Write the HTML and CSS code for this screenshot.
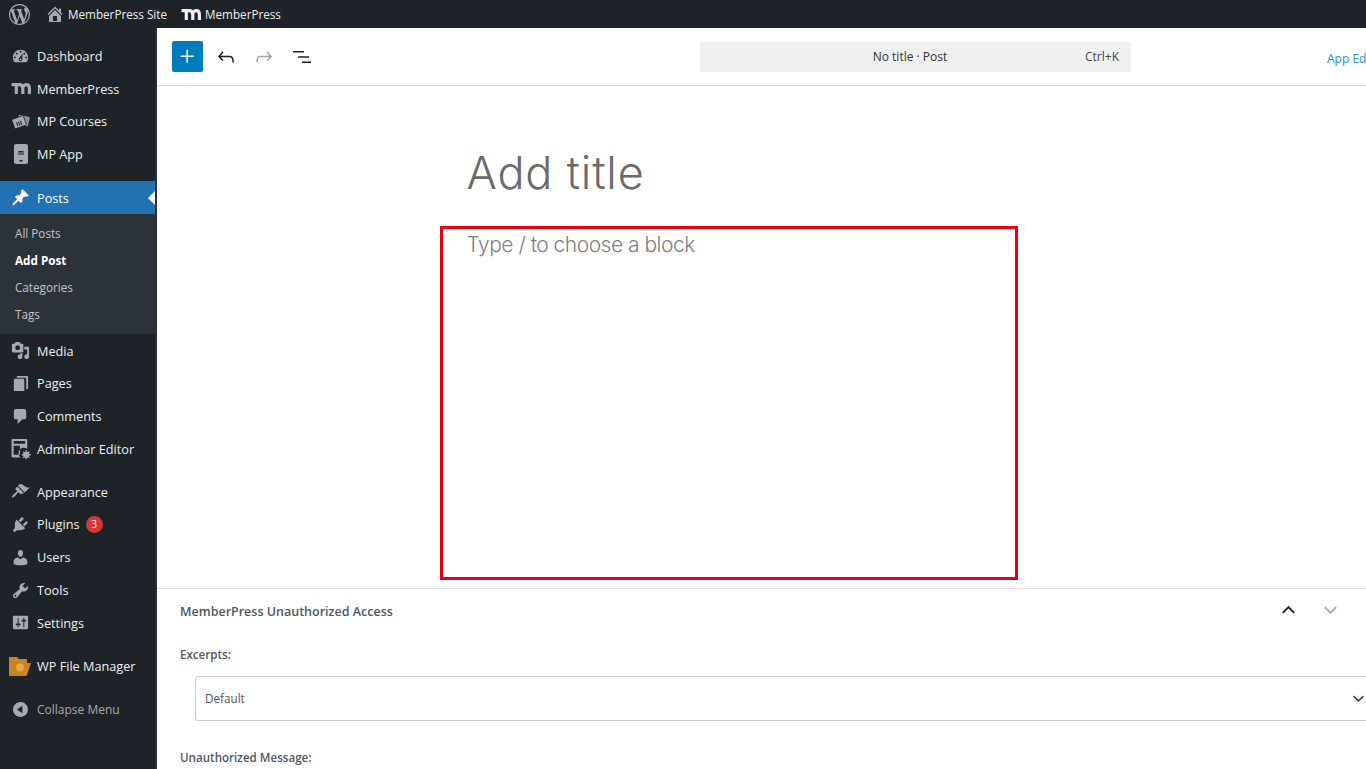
FILE: index.html
```html
<!DOCTYPE html>
<html lang="en">
<head>
<meta charset="utf-8">
<title>Add Post</title>
<link rel="stylesheet" href="styles.css">
</head>
<body>
<div class="app">
  <header class="adminbar">
    <svg class="bar-wp" viewBox="0 0 20 20"><path d="M20 10c0-5.51-4.49-10-10-10C4.48 0 0 4.49 0 10c0 5.52 4.48 10 10 10 5.51 0 10-4.48 10-10zM7.78 15.37L4.37 6.22c.55-.02 1.17-.08 1.17-.08.5-.06.44-1.13-.06-1.11 0 0-1.45.11-2.37.11-.18 0-.37 0-.58-.01C4.12 2.69 6.87 1.11 10 1.11c2.33 0 4.45.87 6.05 2.34-.68-.11-1.65.39-1.65 1.58 0 .74.45 1.36.9 2.1.35.61.55 1.36.55 2.46 0 1.49-1.4 5-1.4 5l-3.03-8.37c.54-.02.82-.17.82-.17.5-.05.44-1.25-.06-1.22 0 0-1.44.12-2.38.12-.87 0-2.33-.12-2.33-.12-.5-.03-.56 1.2-.06 1.22l.92.08 1.26 3.41zM17.41 10c.24-.64.74-1.87.43-4.25.7 1.29 1.05 2.71 1.05 4.25 0 3.29-1.73 6.24-4.4 7.78.97-2.59 1.94-5.2 2.92-7.78zM6.1 18.09C3.12 16.65 1.11 13.53 1.11 10c0-1.3.23-2.48.72-3.59C3.25 10.3 4.67 14.2 6.1 18.09zm4.03-6.63l2.58 6.98c-.86.29-1.76.45-2.71.45-.79 0-1.57-.11-2.29-.33.81-2.38 1.62-4.74 2.42-7.1z"/></svg>
    <svg class="bar-home" viewBox="0 0 20 20"><path d="M16 8.5l1.53 1.53-1.06 1.06L10 4.62l-6.47 6.47-1.06-1.06L10 2.5l4 4v-2h2v4zm-6-2.46l6 5.99V18H4v-5.97zM12 17v-5H8v5h4z"/></svg>
    <span class="bar-text">MemberPress Site</span>
    <svg class="bar-m" viewBox="0 0 20 12"><path d="M.5 2.600h7.500c2.400 0 3.800 1.400 3.800 3.800V12M5.300 3v9M11.800 6.400c0-2.400 1.400-3.800 3.300-3.800s3.300 1.400 3.300 3.800V12"/></svg>
    <span class="bar-text">MemberPress</span>
  </header>
  <div class="body">
    <nav class="sidebar">
      <a class="item"><svg class="ico" viewBox="0 0 20 20"><path d="M3.760 16h12.480c1.100-1.370 1.760-3.110 1.760-5 0-4.420-3.580-8-8-8s-8 3.580-8 8c0 1.890.66 3.630 1.760 5zM10 4c.55 0 1 .45 1 1s-.45 1-1 1-1-.45-1-1 .45-1 1-1zM6 6c.55 0 1 .45 1 1s-.45 1-1 1-1-.45-1-1 .45-1 1-1zm8 0c.55 0 1 .45 1 1s-.45 1-1 1-1-.45-1-1 .45-1 1-1zm-5.370 5.550L12 7v6c0 1.100-.9 2-2 2s-2-.9-2-2c0-.57.24-1.080.63-1.450zM4 10c.55 0 1 .45 1 1s-.45 1-1 1-1-.45-1-1 .45-1 1-1zm12 0c.55 0 1 .45 1 1s-.45 1-1 1-1-.45-1-1 .45-1 1-1zm-5 3c0-.55-.45-1-1-1s-1 .45-1 1 .45 1 1 1 1-.45 1-1z"/></svg><span>Dashboard</span></a>
      <a class="item"><svg class="ico ico-m" viewBox="0 0 20 12"><path d="M.5 2.600h7.500c2.400 0 3.800 1.400 3.800 3.800V12M5.300 3v9M11.800 6.400c0-2.400 1.400-3.800 3.300-3.800s3.300 1.400 3.300 3.800V12"/></svg><span>MemberPress</span></a>
      <a class="item"><svg class="ico" viewBox="0 0 20 20"><rect class="card-back" x="7" y="4" width="12" height="10" rx="1" transform="rotate(14 13 9)"/><rect class="card-edge" x="2" y="5.500" width="13" height="10.500" rx="1" transform="rotate(-20 8.500 10.700)"/><path class="cut" d="M5.800 10.800l1.500 4M7.800 10.100l1.500 4M9.800 9.400l1.500 4"/></svg><span>MP Courses</span></a>
      <a class="item"><svg class="ico ico-app" viewBox="0 0 14 20"><path fill-rule="evenodd" d="M2 0h10c1.100 0 2 .9 2 2v16c0 1.100-.9 2-2 2H2c-1.100 0-2-.9-2-2V2C0 .9.9 0 2 0zm2.500 7v4h1V8h1v3h1V8h1v3h1V7zm1 9v1.500h3V16z"/></svg><span>MP App</span></a>
      <a class="item item-current group-gap"><svg class="ico" viewBox="0 0 20 20"><path d="M10.440 3.020l1.820-1.820 6.360 6.350-1.830 1.820c-1.050-.68-2.480-.57-3.410.36l-.75.75c-.92.93-1.040 2.350-.35 3.410l-1.830 1.820-2.410-2.410-2.800 2.790c-.42.42-3.380 2.710-3.800 2.290s1.860-3.390 2.280-3.810l2.790-2.790L4.100 9.360l1.830-1.820c1.050.69 2.480.57 3.400-.36l.75-.75c.93-.92 1.050-2.350.36-3.410z"/></svg><span>Posts</span></a>
      <div class="submenu">
        <a class="subitem">All Posts</a>
        <a class="subitem subitem-current">Add Post</a>
        <a class="subitem">Categories</a>
        <a class="subitem">Tags</a>
      </div>
      <a class="item"><svg class="ico" viewBox="0 0 20 20"><path fill-rule="evenodd" d="M13 11V4c0-.55-.45-1-1-1h-1.670L9 1H5L3.670 3H2c-.55 0-1 .45-1 1v7c0 .55.45 1 1 1h10c.55 0 1-.45 1-1zM7 4.500c1.380 0 2.500 1.120 2.500 2.500S8.380 9.500 7 9.500 4.500 8.380 4.500 7 5.620 4.500 7 4.500zM14 6h5v10.500c0 1.380-1.120 2.500-2.500 2.500S14 17.880 14 16.500s1.120-2.500 2.500-2.500c.17 0 .34.02.5.05V9h-3V6zm-4 8.050V13h2v3.500c0 1.380-1.120 2.500-2.500 2.500S7 17.880 7 16.500 8.120 14 9.500 14c.17 0 .34.02.5.05z"/></svg><span>Media</span></a>
      <a class="item"><svg class="ico" viewBox="0 0 20 20"><path d="M7 2h10c.55 0 1 .45 1 1v12c0 .55-.45 1-1 1h-1V5c0-.55-.45-1-1-1H6V3c0-.55.45-1 1-1zM4 5h9c.55 0 1 .45 1 1v11c0 .55-.45 1-1 1H4c-.55 0-1-.45-1-1V6c0-.55.45-1 1-1z"/></svg><span>Pages</span></a>
      <a class="item"><svg class="ico" viewBox="0 0 20 20"><path d="M5 2h9c1.100 0 2 .9 2 2v7c0 1.100-.9 2-2 2h-2l-5 5v-5H5c-1.100 0-2-.9-2-2V4c0-1.100.9-2 2-2z"/></svg><span>Comments</span></a>
      <a class="item"><svg class="ico ico-lg" viewBox="0 0 20 20"><path fill-rule="evenodd" d="M1.500 0h13c.55 0 1 .45 1 1v8.500a5 5 0 0 0-6.500 8H1.500c-.55 0-1-.45-1-1V1c0-.55.45-1 1-1zm1 2v2.500h11V2zm0 4.500v8.500h6V6.500z"/><circle cx="14.500" cy="15" r="3"/><circle class="hole" cx="14.500" cy="15" r="1.100"/><path class="cog" d="M14.500 10.800v8.400M10.300 15h8.400M11.500 12l6 6M17.500 12l-6 6"/></svg><span>Adminbar Editor</span></a>
      <a class="item group-gap-mid"><svg class="ico" viewBox="0 0 20 20"><path d="M14.480 11.060L7.410 3.990l1.500-1.500c.5-.56 2.300-.47 3.510.32 1.210.8 1.430 1.280 2.910 2.100 1.180.64 2.450 1.260 4.450.85zm-.71.71L6.700 4.700 4.930 6.470c-.39.39-.39 1.020 0 1.410l1.060 1.060c.39.39.39 1.030 0 1.420-.6.6-1.430 1.110-2.210 1.690-.35.26-.7.53-1.010.84-1.200 1.200-2.400 2.900-1.800 3.500.6.6 2.300-.6 3.500-1.800.31-.31.58-.66.84-1.010.58-.78 1.090-1.610 1.690-2.210.39-.39 1.030-.39 1.420 0l1.060 1.060c.39.39 1.020.39 1.410 0z"/></svg><span>Appearance</span></a>
      <a class="item"><svg class="ico" viewBox="0 0 20 20"><path d="M13.110 4.360L9.870 7.600 8 5.730l3.240-3.240c.35-.34 1.050-.2 1.560.32.52.51.66 1.210.31 1.550zm-8 1.770l.91-1.120 9.010 9.010-1.190.84c-.71.71-2.630 1.160-3.820 1.160H6.140L4.900 17.260c-.59.59-1.540.59-2.120 0-.59-.58-.59-1.530 0-2.120l1.240-1.240v-3.880c0-1.130.4-3.190 1.090-3.890zm7.260 3.970l3.240-3.240c.34-.35 1.040-.21 1.550.31.52.51.66 1.210.31 1.550l-3.240 3.250z"/></svg><span>Plugins</span><b class="badge">3</b></a>
      <a class="item"><svg class="ico" viewBox="0 0 20 20"><path d="M10 9.250c-2.270 0-2.730-3.440-2.730-3.440C7 4.020 7.820 2 9.970 2c2.160 0 2.980 2.020 2.710 3.810 0 0-.41 3.440-2.680 3.440zm0 2.570L12.720 10c2.390 0 4.520 2.330 4.520 4.530v2.490s-3.650 1.130-7.240 1.130c-3.650 0-7.240-1.130-7.240-1.130v-2.490c0-2.250 1.940-4.480 4.470-4.480z"/></svg><span>Users</span></a>
      <a class="item"><svg class="ico" viewBox="0 0 20 20"><path d="M16.680 9.770c-1.340 1.340-3.300 1.670-4.950.99l-5.410 6.520c-.99.99-2.590.99-3.580 0s-.99-2.590 0-3.570l6.520-5.420c-.68-1.650-.35-3.610.99-4.950 1.280-1.280 3.120-1.620 4.720-1.060l-2.890 2.890 2.820 2.820 2.860-2.870c.53 1.580.18 3.390-1.080 4.650zM3.810 16.210c.4.39 1.040.39 1.430 0 .4-.4.4-1.040 0-1.430-.39-.4-1.030-.4-1.430 0-.39.39-.39 1.030 0 1.430z"/></svg><span>Tools</span></a>
      <a class="item"><svg class="ico" viewBox="0 0 20 20"><path d="M18 16V4c0-.55-.45-1-1-1H3c-.55 0-1 .45-1 1v12c0 .55.45 1 1 1h14c.55 0 1-.45 1-1zM8 11h1c.55 0 1 .45 1 1s-.45 1-1 1H8v1.500c0 .28-.22.5-.5.5s-.5-.22-.5-.5V13H6c-.55 0-1-.45-1-1s.45-1 1-1h1V5.500c0-.28.22-.5.5-.5s.5.22.5.5V11zm5-2h-1c-.55 0-1-.45-1-1s.45-1 1-1h1V5.500c0-.28.22-.5.5-.5s.5.22.5.5V7h1c.55 0 1 .45 1 1s-.45 1-1 1h-1v5.500c0 .28-.22.5-.5.5s-.5-.22-.5-.5V9z"/></svg><span>Settings</span></a>
      <a class="item group-gap-lg"><svg class="ico ico-folder" viewBox="0 0 22 19"><path d="M1 0h7l2 2h8v4h4l-4 12c-.2.6-.6 1-1.200 1H1c-.55 0-1-.45-1-1V1c0-.55.45-1 1-1z"/><circle class="folder-dot" cx="11" cy="10.500" r="4"/></svg><span>WP File Manager</span></a>
      <a class="item item-collapse"><svg class="ico" viewBox="0 0 20 20"><path d="M10 2.160c4.330 0 7.840 3.510 7.840 7.840s-3.510 7.840-7.840 7.840S2.160 14.330 2.160 10 5.710 2.160 10 2.160zm2 11.720V6.120L6.180 9.970z"/></svg><span>Collapse Menu</span></a>
    </nav>
    <main class="main">
      <div class="toolbar">
        <button class="add-btn" aria-label="Add block"><svg viewBox="0 0 24 24"><path d="M11 12.500V18h1.500v-5.500H18V11h-5.500V5.500H11V11H5.500v1.500z"/></svg></button>
        <svg class="tool tool-undo" viewBox="0 0 24 24"><path d="M18.300 11.700c-.6-.6-1.400-.9-2.300-.9H6.700l2.900-3.300-1.100-1-4.500 5L8.500 16l1-1-2.700-2.700H16c.5 0 .9.200 1.300.5 1 1 1 3.400 1 4.500v.3h1.500v-.2c0-1.500 0-4.300-1.500-5.700z"/></svg>
        <svg class="tool tool-redo" viewBox="0 0 24 24"><path d="M15.600 6.500l-1.100 1 2.900 3.300H8c-.9 0-1.700.3-2.300.9-1.400 1.500-1.400 4.200-1.400 5.600v.2h1.500v-.3c0-1.100 0-3.500 1-4.500.3-.3.7-.5 1.300-.5h9.200L14.500 15l1.100 1.100 4.600-4.600-4.600-5z"/></svg>
        <svg class="tool tool-list" viewBox="0 0 24 24"><path d="M3 6h11v1.500H3zM8 11.200h11v1.500H8zM12 16.500h9V18h-9z"/></svg>
        <div class="command">
          <span class="command-title">No title · Post</span>
          <span class="command-key">Ctrl+K</span>
        </div>
        <span class="app-editor">App Editor</span>
      </div>
      <div class="canvas">
        <h1 class="post-title">Add title</h1>
        <p class="post-placeholder">Type / to choose a block</p>
        <div class="highlight"></div>
      </div>
      <section class="metabox">
        <div class="metabox-head">
          <h2 class="metabox-title">MemberPress Unauthorized Access</h2>
          <svg class="chev chev-up" viewBox="0 0 16 10"><path d="M2 8l6-6 6 6"/></svg>
          <svg class="chev chev-down" viewBox="0 0 16 10"><path d="M2 2l6 6 6-6"/></svg>
        </div>
        <label class="field-label">Excerpts:</label>
        <div class="select">
          <span>Default</span>
          <svg class="select-chev" viewBox="0 0 16 10"><path d="M2 2l6 6 6-6"/></svg>
        </div>
        <label class="field-label field-label-2">Unauthorized Message:</label>
      </section>
    </main>
  </div>
</div>
</body>
</html>
```
FILE: styles.css
```css
* { box-sizing: border-box; }
html, body { margin: 0; height: 100%; overflow: hidden; }
body { font-family: "Open Sans", "Noto Sans", sans-serif; background: #fff; color: #1e1e1e; }
.app { display: flex; flex-direction: column; width: 1366px; height: 769px; overflow: hidden; }

.adminbar { flex: 0 0 28px; display: flex; align-items: center; background: #1d2327; color: #f0f0f1; padding-left: 9px; }
.bar-wp { width: 21px; height: 21px; fill: #a7aaad; margin-right: 15px; }
.bar-home { width: 20px; height: 20px; fill: #a7aaad; margin-right: 3px; }
.bar-text { font-size: 11.700px; line-height: 28px; }
.bar-m { width: 20px; height: 12px; margin: 0 4px 0 14px; fill: none; stroke: #f0f0f1; stroke-width: 3.200; }

.body { flex: 1; display: flex; min-height: 0; }
.sidebar { flex: 0 0 157px; display: flex; flex-direction: column; background: #1d2327; padding-top: 11.500px; border-right: 2px solid #2a3035; }
.item { position: relative; flex: 0 0 32.800px; display: flex; align-items: center; color: #f0f0f1; font-size: 12.700px; }
.item .ico { position: absolute; left: 11px; top: 7px; width: 19px; height: 19px; fill: #a7aaad; }
.item > span { margin-left: 37px; }
.item .ico-m { top: 10px; height: 12px; width: 20px; fill: none; stroke: #a7aaad; stroke-width: 3.200; }
.item .ico-app { left: 14px; top: 6px; width: 14px; height: 20px; }
.item .ico-lg { left: 11px; top: 6px; width: 21px; height: 21px; }
.item .ico-folder { left: 9px; top: 7px; width: 22px; height: 19px; fill: #c9841f; }
.item .card-back { fill: #8f9295; }
.item .card-edge { fill: #a7aaad; stroke: #1d2327; stroke-width: .8; }
.item .cut { fill: none; stroke: #1d2327; stroke-width: 1.100; }
.item .hole { fill: #1d2327; }
.item .cog { fill: none; stroke: #a7aaad; stroke-width: 1.200; }
.folder-dot { fill: #e2ab4e; }
.group-gap { margin-top: 10.300px; }
.group-gap-mid { margin-top: 9.800px; }
.group-gap-lg { margin-top: 10.500px; }
.item-current { background: #2271b1; color: #fff; padding-top: 1px; }
.item-current .ico { fill: #fff; }
.item-current::after { content: ""; position: absolute; right: 0; top: 10px; border: 7px solid transparent; border-right-color: #fff; border-left-width: 0; }
.item-collapse { margin-top: 10.500px; padding-top: 1px; color: #a7aaad; font-size: 12px; }
.submenu { display: flex; flex-direction: column; padding: 6px 0 6.500px; background: #2c3338; }
.subitem { height: 27px; line-height: 27px; padding-left: 15px; font-size: 11.700px; color: #c3c4c7; }
.subitem-current { color: #fff; font-weight: 700; }
.badge { display: inline-block; width: 17px; height: 17px; margin: 1px 0 0 6px; border-radius: 50%; background: #d63638; color: #fff; font-size: 10px; font-weight: 400; line-height: 17px; text-align: center; }

.main { flex: 1; min-width: 0; display: flex; flex-direction: column; overflow: hidden; background: #fff; }
.toolbar { flex: 0 0 58px; display: flex; align-items: center; padding-left: 15px; border-bottom: 1px solid #e0e0e0; white-space: nowrap; }
.add-btn { flex: 0 0 31px; width: 31px; height: 31px; padding: 3px; border: 0; border-radius: 2px; background: #007cba; }
.add-btn svg { display: block; width: 25px; height: 25px; fill: #fff; }
.tool { flex: 0 0 24px; width: 24px; height: 24px; fill: #1e1e1e; }
.tool-undo { margin-left: 11px; }
.tool-redo { margin-left: 14px; fill: #a5a5a5; }
.tool-list { margin-left: 14px; }
.command { flex: 0 0 431px; position: relative; display: flex; align-items: center; justify-content: center; height: 30px; margin-left: 386px; border-radius: 2px; background: #f0f0f0; font-size: 12px; color: #333; }
.command-title { margin-right: 11px; }
.command-key { position: absolute; right: 12px; color: #444; }
.app-editor { margin: 3px 0 0 196px; font-size: 12px; color: #2f8fc4; }

.canvas { position: relative; flex: 1; min-height: 0; padding: 55px 0 0 309.500px; }
.post-title { margin: 0; font-family: Inter, "Open Sans", sans-serif; font-size: 45px; line-height: 64px; font-weight: 350; letter-spacing: .8px; color: #6a6a6a; }
.post-placeholder { margin: 25px 0 0; font-family: Inter, "Open Sans", sans-serif; font-size: 21px; line-height: 30px; font-weight: 300; letter-spacing: -.5px; color: #808080; }
.highlight { position: absolute; left: 283px; top: 140px; width: 578px; height: 354px; border: 3px solid #e60012; }

.metabox { flex: 0 0 181px; border-top: 1px solid #e0e0e0; padding-left: 23px; }
.metabox-head { position: relative; height: 46px; display: flex; align-items: center; }
.metabox-title { margin: 0; font-size: 12.500px; line-height: 46px; font-weight: 600; color: #50575e; }
.chev { position: absolute; top: 16px; width: 15px; height: 10px; fill: none; stroke-width: 2; }
.chev-up { left: 1101px; stroke: #1e1e1e; }
.chev-down { left: 1143px; stroke: #aaa; }
.field-label { display: block; margin-top: 10px; font-size: 11.600px; line-height: 20px; font-weight: 600; color: #50575e; }
.field-label-2 { margin-top: 27px; }
.select { position: relative; display: flex; align-items: center; width: 1200px; height: 45px; margin: 11px 0 0 15px; padding: 0 0 2px 9px; border: 1px solid #ccc; border-radius: 3px; font-size: 11.700px; color: #50575e; }
.select-chev { position: absolute; left: 1156px; top: 17px; width: 13px; height: 9px; fill: none; stroke: #444; stroke-width: 2; }
```
